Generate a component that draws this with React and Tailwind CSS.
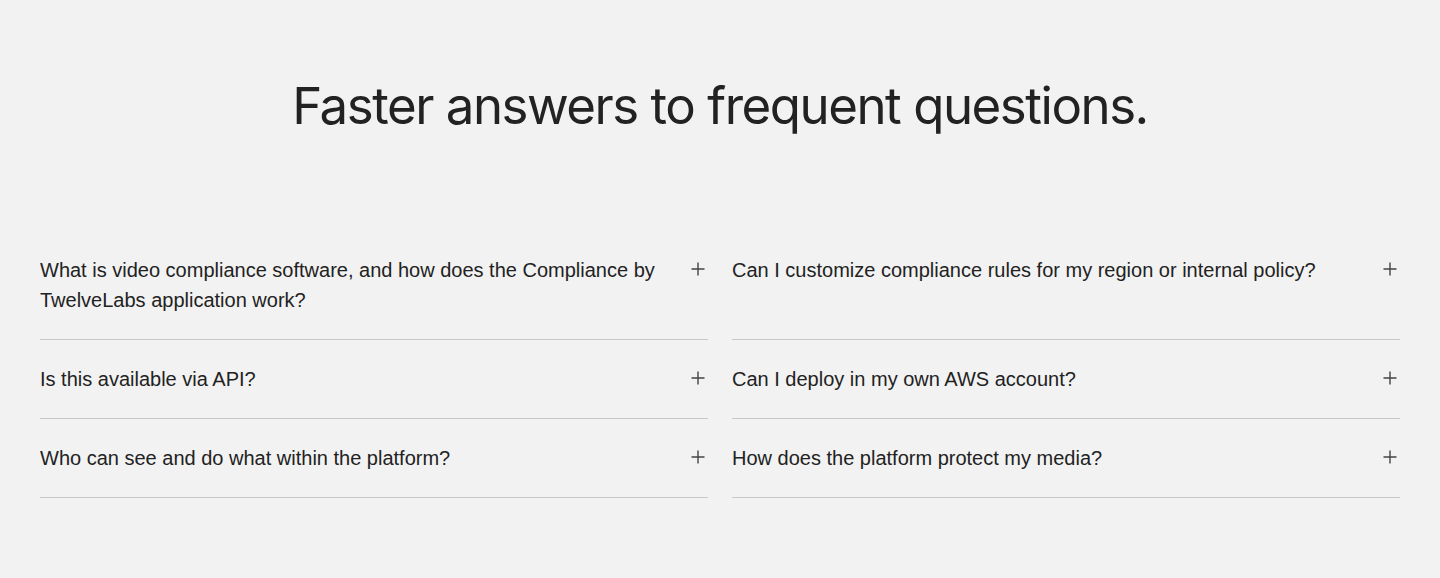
import React, { useState } from 'react'

const faqs = [
  'What is video compliance software, and how does the Compliance by TwelveLabs application work?',
  'Can I customize compliance rules for my region or internal policy?',
  'Is this available via API?',
  'Can I deploy in my own AWS account?',
  'Who can see and do what within the platform?',
  'How does the platform protect my media?',
]

function PlusIcon() {
  return (
    <svg width="16" height="16" viewBox="0 0 16 16" fill="none" className="shrink-0 text-[#444]">
      <path d="M8 1.5v13M1.5 8h13" stroke="currentColor" strokeWidth="1.4" />
    </svg>
  )
}

export default function App() {
  const [open, setOpen] = useState(null)

  return (
    <div className="min-h-[578px] bg-[#f2f2f2] px-10 pt-[74px] pb-20 text-[#222]">
      <h2 className="text-center font-['Inter',sans-serif] text-[51px] font-normal leading-[64px] tracking-[-0.029em]">
        Faster answers to frequent questions.
      </h2>

      {/* FAQ grid */}
      <div className="mt-[93px] grid grid-cols-2 gap-x-6 font-['Liberation_Sans',Arial,sans-serif]">
        {faqs.map((q, i) => (
          <button
            key={i}
            type="button"
            onClick={() => setOpen(open === i ? null : i)}
            className="flex items-start justify-between gap-8 border-b border-[#c8c8c8] pt-6 pb-6 text-left"
          >
            <span className="text-[20px] leading-[30px]">{q}</span>
            <span className="mt-[6px] mr-[2px]"><PlusIcon /></span>
          </button>
        ))}
      </div>
    </div>
  )
}
